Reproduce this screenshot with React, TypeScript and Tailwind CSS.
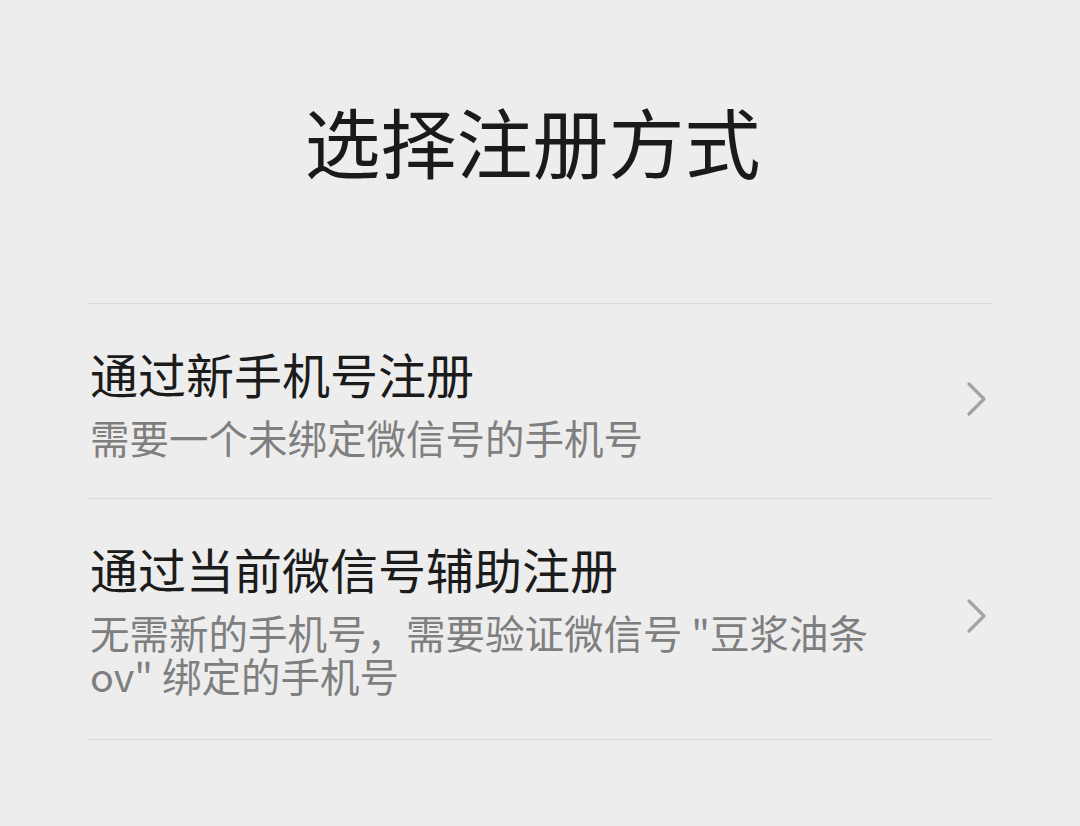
import React from "react";

function Chevron() {
  return (
    <svg width="22" height="34" viewBox="0 0 22 34" fill="none" className="block shrink-0">
      <polyline points="3,2 18,17 3,32" stroke="#a3a3a3" strokeWidth="3.2" strokeLinecap="round" strokeLinejoin="round" fill="none" />
    </svg>
  );
}

function Row({ title, children, pad }: { title: string; children: React.ReactNode; pad: string }) {
  return (
    <div className={`flex items-center border-b border-[#dadada] pt-[45px] ${pad}`}>
      <div className="flex-1 pl-[2px]">
        <div className="text-[48px] leading-[48px] text-[#1b1b1b]">{title}</div>
        <div className="mt-[18px] text-[39.5px] leading-[43px] text-[#7f7f7f]">{children}</div>
      </div>
      <div className="pr-[4px] mb-[9px]">
        <Chevron />
      </div>
    </div>
  );
}

export default function App() {
  return (
    <div
      className="w-full h-[826px] bg-[#ededed] overflow-hidden"
      style={{ fontFamily: '"Noto Sans CJK SC", "Noto Sans", sans-serif' }}
    >
      <div className="pt-[102px] pr-[15px] text-center text-[76px] leading-[76px] text-[#1a1a1a]">
        选择注册方式
      </div>
      <div className="mt-[125px] mx-[88px] border-t border-[#dadada]">
        <Row title="通过新手机号注册" pad="pb-[40px]">
          需要一个未绑定微信号的手机号
        </Row>
        <Row title="通过当前微信号辅助注册" pad="pb-[43px]">
          无需新的手机号，需要验证微信号 "豆浆油条
          <br />
          ov" 绑定的手机号
        </Row>
      </div>
    </div>
  );
}
